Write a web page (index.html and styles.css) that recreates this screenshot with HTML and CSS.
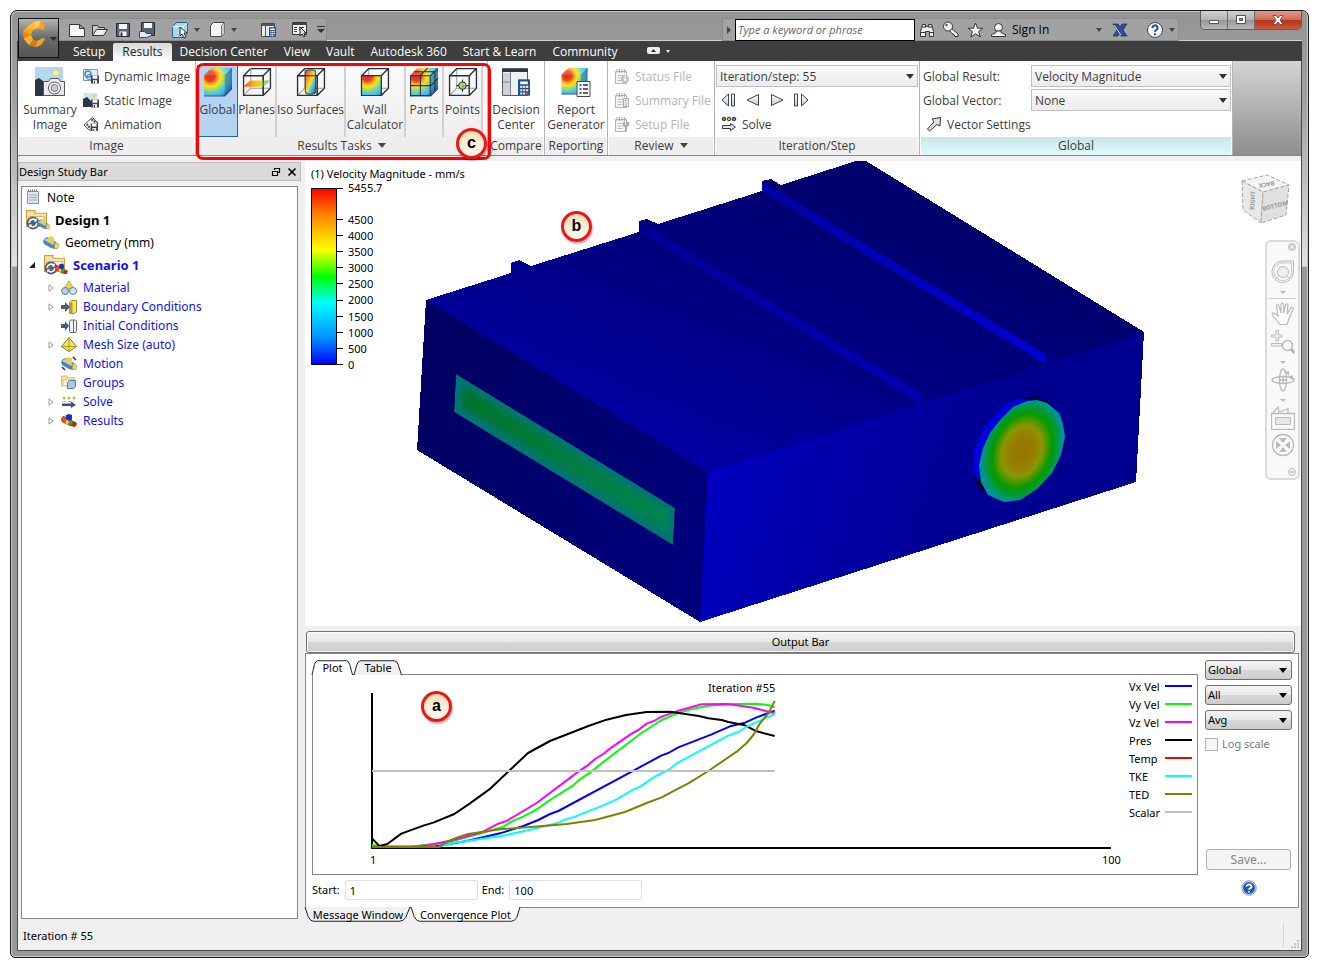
FILE: index.html
```html
<!DOCTYPE html>
<html lang="en">
<head>
<meta charset="utf-8">
<title>Simulation CFD - Results</title>
<link rel="stylesheet" href="styles.css">
</head>
<body>
<svg class="defs" width="0" height="0" aria-hidden="true">
  <defs>
    <radialGradient id="heat" gradientUnits="userSpaceOnUse" cx="7" cy="9" r="25">
      <stop offset="0" stop-color="#e02a20"/><stop offset=".2" stop-color="#ea4322"/><stop offset=".28" stop-color="#f79a1c"/>
      <stop offset=".4" stop-color="#fbe01e"/><stop offset=".5" stop-color="#b9e04a"/><stop offset=".62" stop-color="#5fd3c8"/>
      <stop offset=".78" stop-color="#48b4ee"/><stop offset="1" stop-color="#1d58c0"/>
    </radialGradient>
    <linearGradient id="tube" x1="0" y1="0" x2="1" y2="1">
      <stop offset="0" stop-color="#e03a20"/><stop offset=".3" stop-color="#f7a01c"/><stop offset=".5" stop-color="#f3e02a"/>
      <stop offset=".7" stop-color="#4cc4e0"/><stop offset="1" stop-color="#1d58c0"/>
    </linearGradient>
    <linearGradient id="plane" x1="0" y1="0" x2="1" y2="0">
      <stop offset="0" stop-color="#e8481c"/><stop offset=".4" stop-color="#f7b51c"/><stop offset=".7" stop-color="#d8e030"/><stop offset="1" stop-color="#48c4d8"/>
    </linearGradient>
    <linearGradient id="steel" x1="0" y1="0" x2="0" y2="1"><stop offset="0" stop-color="#fff"/><stop offset="1" stop-color="#c4c8ce"/></linearGradient>
    <symbol id="wire" viewBox="0 0 29 29">
      <path d="M8.500 1.500v19h19M8.500 20.500l-7 7" fill="none" stroke="#9a9ea8"/>
      <path d="M1.500 8.500h19v19h-19zM8.500 1.500h19v19M1.500 8.500l7-7M20.500 8.500l7-7M20.500 27.500l7-7" fill="none" stroke="#2b2f38" stroke-width="1.300"/>
    </symbol>
    <symbol id="solid" viewBox="0 0 29 29">
      <path d="M1 8l7-7h20v20l-7 7H1z" fill="url(#heat)"/>
      <path d="M21 8l7-7v20l-7 7z" fill="#123" opacity=".28"/>
      <path d="M1 8l7-7h20l-7 7z" fill="#fff" opacity=".15"/>
      <path d="M1 28h20l7-7" fill="none" stroke="#27568e"/>
    </symbol>
    <symbol id="disk" viewBox="0 0 10 10"><path d="M0 0h10v10H0z" fill="#3c4454"/><path d="M2 0h6v4H2zM2.500 6h5v4h-5z" fill="#fff"/><path d="M3.500 7h1.500v3H3.500z" fill="#3c4454"/></symbol>
    <symbol id="notepad" viewBox="0 0 16 16"><path d="M1.500 3.500h11v12h-11z" fill="#f4f4f4" stroke="#b4b4b4"/><path d="M3 1v4M5.500 1v4M8 1v4M10.500 1v4" stroke="#a8a8a8"/><path d="M3.500 7.500h7M3.500 10h7M3.500 12.500h5" stroke="#c0c0c0"/></symbol>
    <symbol id="pipe" viewBox="0 0 16 13">
      <path d="M0 5l2-3 3-1 8 5 1 3-2 4-4-1-7-4z" fill="#4f83b8"/><path d="M1 4l3-2 8 5-2 2z" fill="#a8cdea"/>
      <path d="M5 1.500L8 0l3 1.500V6L8 7 5 5z" fill="#e8d44c"/><path d="M12 6.500l3 1 1 3-2 2.500-3-1.500z" fill="#f0dc50" stroke="#937f28" stroke-width=".6"/>
    </symbol>
    <symbol id="hotpipe" viewBox="0 0 16 13">
      <path d="M0 5l2-3 4 1 6 4 3 1 1 2-2 3-5-1-8-4z" fill="#c8201c"/><path d="M1 4l3-1 3 2-2 4-4-2z" fill="#e4501c"/><path d="M6 5l3 2-2 4-3-2z" fill="#f4d024"/><path d="M9 6l3 2-2 4-3-2z" fill="#30a040"/>
      <path d="M5 1l3-1 3 1v4.500L8 7 5 5z" fill="#1c30c0"/>
    </symbol>
    <symbol id="folder" viewBox="0 0 20 18"><path d="M.5 16.500V1.500h8v2.500h11v12.500z" fill="#f5e2ac" stroke="#c8a040"/><path d="M2.500 16V7h15v9z" fill="#fbf2d4" stroke="#d8b868"/></symbol>
    <symbol id="cycle" viewBox="0 0 13 13"><circle cx="6.500" cy="6.500" r="6" fill="#50607a"/><path d="M3 6.500a3.500 3.500 0 0 1 6-2.500M10 6.500a3.500 3.500 0 0 1-6 2.500" fill="none" stroke="#fff" stroke-width="1.500"/><path d="M10 2v3H7zM3 11V8h3z" fill="#fff"/></symbol>
    <symbol id="calc" viewBox="0 0 11 15"><path d="M0 0h11v15H0z" fill="#1f5288"/><path d="M2 2h7v2.500H2z" fill="#fff"/><path d="M2 6h2v2H2zm2.700 0h2v2h-2zM7.400 6h2v2h-2zM2 9h2v2H2zm2.700 0h2v2h-2zM7.400 9h2v2h-2zM2 12h2v2H2zm2.700 0h2v2h-2z" fill="#dfe9f4"/><path d="M7.400 11.500h2V14h-2z" fill="#e04030"/></symbol>
  </defs>
</svg>

<div class="window">
  <header class="chrome">
    <button class="app-button" aria-label="Application menu">
      <svg width="40" height="40" viewBox="0 0 40 40"><path d="M14 3l8-1 4 3-1 6-6-2-5 2-2 5 2 5 4 1 6-3 2 1-4 6-5 2-7-2-5-6-1-8z" fill="#f6a41c"/><path d="M14 3l5 6-5 2-8-1z" fill="#ffb93a"/><path d="M22 2l-3 7-5-6z" fill="#ffd060"/><path d="M4 12l8 4-7 4z" fill="#e38a10"/><path d="M5 20l7-4 2 5-4 5z" fill="#fbb030"/><path d="M10 26l4-5 4 1-1 6z" fill="#d07f0a"/><path d="M31 18h7l-3.500 4z" fill="#2c2c2c"/></svg>
    </button>
    <div class="title-row">
      <div class="quick">
        <button aria-label="New"><svg width="18" height="16" viewBox="0 0 18 16"><path d="M1.500 2.500h10l5 4v8h-15zM11.500 2.500v4h5" fill="#f8f8f8" stroke="#30343c"/></svg></button>
        <button aria-label="Open"><svg width="18" height="16" viewBox="0 0 18 16"><path d="M1.500 13.500v-10h5l1 2h6v2" fill="#ccc" stroke="#30343c"/><path d="M1.500 13.500l4-6h11l-4 6z" fill="#eee" stroke="#30343c"/></svg></button>
        <button aria-label="Save"><svg width="16" height="16" viewBox="0 0 16 16"><path d="M1.500 1.500h13v13h-13z" fill="#5a6270" stroke="#222a36"/><path d="M4 2h8v5H4zM4.500 9.500h7V14h-7z" fill="#f6f6f6"/><path d="M5.500 10.500h2V14h-2z" fill="#333"/></svg></button>
        <button aria-label="Save as"><svg width="18" height="18" viewBox="0 0 18 18"><path d="M3.500 1.500h13v13h-13z" fill="#5a6270" stroke="#222a36"/><path d="M6 2h8v5H6z" fill="#f6f6f6"/><path d="M1.500 10.500h5l2 2h5v2l-5 2h-7z" fill="#dcebf6" stroke="#245078"/></svg></button>
        <button class="gap" aria-label="Select volume"><svg width="18" height="18" viewBox="0 0 18 18"><path d="M1.500 5.500l4-4h11v11l-4 4h-11z" fill="#a5d8f2" stroke="#24658e"/><path d="M1.500 5.500h11v11M12.500 5.500l4-4" fill="none" stroke="#e8f7ff"/><path d="M9 6v9l2-2 2 4 2-1-2-4h3z" fill="#fff" stroke="#222"/></svg></button>
        <i class="tri"></i>
        <button class="wide" aria-label="Visual style"><svg width="17" height="17" viewBox="0 0 17 17"><path d="M1.500 4.500l3-3h11v11l-3 3h-11z" fill="#f6f6f6" stroke="#444"/><path d="M12.500 4.500l3-3v11l-3 3z" fill="#ccc" stroke="#777"/></svg></button>
        <i class="tri"></i>
        <button class="far" aria-label="Decision center"><svg width="17" height="16" viewBox="0 0 17 16"><path d="M1.500 1.500h13v13h-13z" fill="#eee" stroke="#444"/><path d="M2 3h12" stroke="#555" stroke-width="2"/><path d="M5.500 3v11" stroke="#555"/><use href="#calc" x="9" y="5" width="7" height="10"/></svg></button>
        <button class="far" aria-label="Customize"><svg width="17" height="17" viewBox="0 0 17 17"><path d="M1.500 1.500h14v12h-14z" fill="#f2f2f2" stroke="#333"/><path d="M1 3h15" stroke="#444" stroke-width="2"/><path d="M3 6.500h3M3 8.500h3M3 10.500h3M8 6.500h5M8 8.500h2" stroke="#444"/><path d="M9 6v9l2-2 2 3 1-1-1-3h2z" fill="#ddd" stroke="#222"/></svg></button>
        <svg class="more" width="10" height="8" viewBox="0 0 10 8"><path d="M1 .5h8" stroke="#333"/><path d="M1 3h8L5 7z" fill="#333"/></svg>
      </div>
      <div class="info">
        <svg width="12" height="10" viewBox="0 0 12 10"><path d="M4 1l4 4-4 4z" fill="#444"/></svg>
        <input type="text" aria-label="Search" placeholder="Type a keyword or phrase">
        <button aria-label="Find"><svg width="17" height="16" viewBox="0 0 17 16"><path d="M1.500 14.500v-5l2-7h3v2h3v-2h3l2 7v5h-4v-5h-4v5z" fill="#eee" stroke="#30343c"/><path d="M3 5h4M9 5h4M2 10.500h4M10 10.500h4" stroke="#30343c"/></svg></button>
        <button aria-label="Subscription"><svg width="18" height="17" viewBox="0 0 18 17"><path d="M9 7l7 6v2.500h-3l-1-2-2-1-3-3.500" fill="#eee" stroke="#30343c"/><circle cx="6" cy="5.500" r="4.500" fill="#f2f2f2" stroke="#30343c"/><circle cx="4.500" cy="4" r="1.200" fill="#555"/></svg></button>
        <button aria-label="Favorites"><svg width="17" height="16" viewBox="0 0 17 16"><path d="M8.500 1l2 5.200h5.500l-4.400 3.400 1.700 5.400-4.800-3.300L3.700 15l1.700-5.400L1 6.200h5.500z" fill="#f6f6f6" stroke="#30343c"/></svg></button>
        <button class="sign"><svg width="17" height="16" viewBox="0 0 17 16"><circle cx="8.500" cy="5.500" r="4" fill="#f6f6f6" stroke="#30343c"/><path d="M1.500 14.500v-2l4-1.500 1-2h4l1 2 4 1.500v2z" fill="#f6f6f6" stroke="#30343c"/></svg>Sign In</button>
        <i class="tri last"></i>
        <button aria-label="Exchange"><svg width="16" height="14" viewBox="0 0 16 14"><path d="M1 1h5l2 3 2-3h5l-4 6 4 6H9L7.500 10 6 13H1l4-6z" fill="#2e4d94" stroke="#17295c" stroke-width=".7"/><path d="M2 2l7 10" stroke="#dbe3f4"/></svg></button>
        <button class="help" aria-label="Help"><svg width="18" height="18" viewBox="0 0 18 18"><circle cx="9" cy="9" r="7.500" fill="#f7f9fc" stroke="#3b465c"/><path d="M6.500 7a2.500 2.500 0 1 1 3.800 2c-1 .6-1.300 1-1.300 2" fill="none" stroke="#2050a0" stroke-width="2"/><path d="M8 12.200h2v2H8z" fill="#2050a0"/></svg></button>
        <i class="tri"></i>
      </div>
      <div class="caption">
        <button aria-label="Minimize"><svg width="12" height="10" viewBox="0 0 12 10"><path d="M1.500 5.500h9v3h-9z" fill="#fff" stroke="#555"/></svg></button>
        <button aria-label="Maximize"><svg width="12" height="10" viewBox="0 0 12 10"><path d="M1.500 .5h9v8h-9z" fill="#fff" stroke="#555"/><path d="M4.500 3.500h3v2h-3z" fill="#999" stroke="#555"/></svg></button>
        <button class="close" aria-label="Close"><svg width="12" height="10" viewBox="0 0 12 10"><path d="M1 .5h3l2 2.500 2-2.500h3L8 5l3 4.500H8L6 7 4 9.500H1L4 5z" fill="#fff" stroke="#6a3a34" stroke-width=".8"/></svg></button>
      </div>
    </div>
    <nav class="tabs">
      <button>Setup</button><button class="on">Results</button><button>Decision Center</button><button>View</button><button>Vault</button><button>Autodesk 360</button><button>Start &amp; Learn</button><button>Community</button>
      <svg width="24" height="8" viewBox="0 0 24 8"><rect width="13" height="7" rx="2" fill="#eee"/><path d="M4 5l2.500-3L9 5z" fill="#333"/><path d="M19 3h4l-2 3z" fill="#eee"/></svg>
    </nav>
  </header>

  <div class="client">
    <div class="ribbon">
      <section class="panel p-image">
        <div class="body">
          <button class="big"><svg width="32" height="30" viewBox="0 0 32 30"><path d="M1 0h28v29H1z" fill="#b5d8ee"/><path d="M1 18h28v11H1z" fill="#dfeefa"/><circle cx="22" cy="6" r="3" fill="#fff3a0" stroke="#f0d468"/><path d="M1 13l4-2 4 3 3 15H1z" fill="#2e3642"/><path d="M9.500 14.500h5l2-3h8l2 3h4v14h-21z" fill="#e8eaed" stroke="#50555e"/><circle cx="20.500" cy="21" r="6" fill="#fff" stroke="#50555e"/><circle cx="20.500" cy="21" r="3.500" fill="#c8ccd2" stroke="#777"/></svg>Summary<br>Image</button>
          <div class="stack">
            <button><svg width="16" height="16" viewBox="0 0 16 16"><path d="M.5 1.500h14v11H.5z" fill="#e4ecf4" stroke="#8a93a0"/><circle cx="5" cy="6" r="3" fill="none" stroke="#4888c0" stroke-width="1.500"/><circle cx="6" cy="9" r="2.500" fill="none" stroke="#4888c0"/><use href="#disk" x="8" y="7" width="8" height="9"/></svg>Dynamic Image</button>
            <button><svg width="16" height="16" viewBox="0 0 16 16"><path d="M.5 1h14v12H.5z" fill="#cfe4f2"/><circle cx="11" cy="4" r="1.500" fill="#f0d040"/><path d="M0 7l4-2 4 4v6H0z" fill="#2e3642"/><use href="#disk" x="8" y="7" width="8" height="9"/></svg>Static Image</button>
            <button><svg width="16" height="16" viewBox="0 0 17 16"><path d="M1 9L10 1l6 6-6 8-4-1z" fill="#f4f4f4" stroke="#3c4454"/><path d="M4 8l4 5M9 3l5 4" stroke="#3c4454" stroke-dasharray="2 1" stroke-width="2"/><use href="#disk" x="8" y="7" width="8" height="9"/></svg>Animation</button>
          </div>
        </div>
        <h2>Image</h2>
      </section>
      <section class="panel p-tasks">
        <div class="body tasks">
          <button class="t-global on"><svg width="30" height="30" viewBox="0 0 29 29"><use href="#solid"/></svg>Global</button>
          <button class="t-planes"><svg width="30" height="30" viewBox="0 0 29 29"><use href="#wire"/><path d="M1 19l7-6h19l-6 6z" fill="url(#plane)"/><path d="M20.500 8.500v19" stroke="#2b2f38"/></svg>Planes</button>
          <button class="t-iso"><svg width="30" height="30" viewBox="0 0 29 29"><use href="#wire"/><path d="M9 5v19c0 3 10 3 10 0V5c0-3-10-3-10 0z" fill="url(#tube)" stroke="#274a70"/><path d="M1 8.500h19.500v19" fill="none" stroke="#2b2f38"/></svg>Iso Surfaces</button>
          <button class="t-wall"><svg width="30" height="30" viewBox="0 0 29 29"><use href="#wire"/><path d="M1.500 8.500h19v19h-19z" fill="url(#heat)" stroke="#2b2f38"/></svg>Wall<br>Calculator</button>
          <button class="t-parts"><svg width="30" height="30" viewBox="0 0 29 29"><use href="#solid"/><path d="M1.500 8.500h19v19h-19zM1 18h20l7-7M11 28V8l7-7M5 4.500h20v19M20.500 8.500l7-7" fill="none" stroke="#2b2f38"/></svg>Parts</button>
          <button class="t-points"><svg width="30" height="30" viewBox="0 0 29 29"><use href="#wire"/><path d="M14 12v12M8 18h12" stroke="#2b2f38"/><circle cx="14" cy="18" r="3.500" fill="#c9d85a" stroke="#2b2f38"/><circle cx="14.500" cy="18.500" r="1.500" fill="#60b8c8"/></svg>Points</button>
        </div>
        <h2>Results Tasks <i class="drop"></i></h2>
        <div class="highlight"></div>
        <div class="callout call-c">c</div>
      </section>
      <section class="panel p-compare">
        <div class="body"><button class="big"><svg width="30" height="30" viewBox="0 0 30 30"><path d="M1.500 1.500h25v27h-25z" fill="#eef0f2" stroke="#555c68"/><path d="M1 2h26v3H1z" fill="#30343c"/><path d="M2 6h7v22H2z" fill="#ccd2da"/><path d="M9.500 5v23M2 15h7" stroke="#7c8494"/><use href="#calc" x="17" y="12" width="12" height="17"/></svg>Decision<br>Center</button></div>
        <h2>Compare</h2>
      </section>
      <section class="panel p-report">
        <div class="body"><button class="big"><svg width="32" height="30" viewBox="0 0 31 30"><use href="#solid" width="28" height="28"/><path d="M16.500 14.500h13v15h-13z" fill="#f4f6f8" stroke="#444c58"/><path d="M19 18h2M19 22h2M19 26h2M22.500 18h5M22.500 22h5M22.500 26h5" stroke="#333" stroke-width="1.500"/></svg>Report<br>Generator</button></div>
        <h2>Reporting</h2>
      </section>
      <section class="panel p-review">
        <div class="body stack dim">
          <button disabled><svg width="16" height="16" viewBox="0 0 16 16"><use href="#notepad"/><circle cx="11" cy="11" r="4" fill="#c4c4c4"/><path d="M11 8v1M11 10v3" stroke="#fff" stroke-width="1.500"/></svg>Status File</button>
          <button disabled><svg width="16" height="16" viewBox="0 0 16 16"><use href="#notepad"/><path d="M9.500 6.500h5v8h-5z" fill="#eee" stroke="#aaa"/><path d="M11 8.500h2M11 11h2M11 13h2" stroke="#aaa"/></svg>Summary File</button>
          <button disabled><svg width="16" height="16" viewBox="0 0 16 16"><use href="#notepad"/><path d="M10 6v3l2 1.500L14 9V6M12 10v5" fill="none" stroke="#aaa" stroke-width="2"/></svg>Setup File</button>
        </div>
        <h2>Review <i class="drop"></i></h2>
      </section>
      <section class="panel p-step">
        <div class="body col">
          <span class="pick"><select aria-label="Iteration step"><option>Iteration/step: 55</option></select></span>
          <div class="play">
            <button aria-label="First"><svg width="16" height="14" viewBox="0 0 16 14"><path d="M7.500 1v12L1 7zM10.500 1h3v12h-3z" fill="url(#steel)" stroke="#3c4454"/></svg></button>
            <button aria-label="Back"><svg width="16" height="14" viewBox="0 0 16 14"><path d="M13.500 1.500v11L2 7z" fill="url(#steel)" stroke="#3c4454"/></svg></button>
            <button aria-label="Play"><svg width="16" height="14" viewBox="0 0 16 14"><path d="M2.500 1.500v11L14 7z" fill="url(#steel)" stroke="#3c4454"/></svg></button>
            <button aria-label="Last"><svg width="16" height="14" viewBox="0 0 16 14"><path d="M8.500 1v12L15 7zM1.500 1h3v12h-3z" fill="url(#steel)" stroke="#3c4454"/></svg></button>
          </div>
          <button class="line"><svg width="16" height="16" viewBox="0 0 16 16"><circle cx="3" cy="3" r="1.800" fill="#d06020" stroke="#333"/><circle cx="8" cy="3" r="1.800" fill="#d8c030" stroke="#333"/><circle cx="13" cy="3" r="1.800" fill="#4880d0" stroke="#333"/><path d="M1.500 9.500h8v-2l5 3.500-5 3.500v-2h-8z" fill="#e8e8e8" stroke="#30343c"/></svg>Solve</button>
        </div>
        <h2>Iteration/Step</h2>
      </section>
      <section class="panel p-global">
        <div class="body col">
          <label class="field"><span>Global Result:</span><span class="pick"><select><option>Velocity Magnitude</option></select></span></label>
          <label class="field"><span>Global Vector:</span><span class="pick"><select><option>None</option></select></span></label>
          <button class="line"><svg width="16" height="16" viewBox="0 0 16 16"><path d="M1.500 13l6.500-7-2-3 8.500-1.500L14 10l-3-1.500-7.500 6.500z" fill="#e0e4e8" stroke="#30343c"/></svg>Vector Settings</button>
        </div>
        <h2>Global</h2>
      </section>
    </div>

    <div class="work">
      <aside class="study">
        <div class="study-head"><span>Design Study Bar</span>
          <button aria-label="Float"><svg width="10" height="10" viewBox="0 0 10 10"><path d="M3.500 3V1.500h5v4H7M1.500 4.500h5v4h-5zM3 1.500h6M1 4.500h6" fill="none" stroke="#000" stroke-width="1.200"/></svg></button>
          <button aria-label="Close bar"><svg width="10" height="10" viewBox="0 0 10 10"><path d="M1.500 1.500l7 7M8.500 1.500l-7 7" stroke="#000" stroke-width="1.700"/></svg></button>
        </div>
        <ul class="tree">
          <li class="note"><svg width="14" height="16" viewBox="0 0 14 16"><path d="M1.500 2.500h11v12h-11z" fill="#dfe6ee" stroke="#8a93a0"/><path d="M2 1.500h10" stroke="#777" stroke-dasharray="1 1" stroke-width="2"/><path d="M3 6h8M3 8.500h8M3 11h8" stroke="#9fabba"/></svg>Note</li>
          <li class="design"><svg width="24" height="22" viewBox="0 0 24 22"><use href="#folder" x="0" y="0" width="21" height="19"/><use href="#cycle" x="0" y="7" width="14" height="14"/><use href="#pipe" x="11" y="9" width="13" height="12"/></svg>Design 1</li>
          <li class="geo"><svg width="16" height="13" viewBox="0 0 16 13"><use href="#pipe"/></svg>Geometry (mm)</li>
          <li class="scen"><button class="tog" aria-label="Collapse"><svg width="6" height="6" viewBox="0 0 6 6"><path d="M6 0v6H0z" fill="#222"/></svg></button><svg width="24" height="22" viewBox="0 0 24 22"><use href="#folder" x="0" y="0" width="21" height="19"/><use href="#cycle" x="0" y="7" width="14" height="14"/><use href="#hotpipe" x="11" y="9" width="13" height="12"/></svg>Scenario 1</li>
          <li class="item"><button class="tog" aria-label="Expand"><svg width="6" height="8" viewBox="0 0 6 8"><path d="M1 .8v6.400L5 4z" fill="#fff" stroke="#999"/></svg></button><svg width="16" height="14" viewBox="0 0 16 14"><path d="M8 0l4 6-4 2-4-2z" fill="#e8dc48" stroke="#8c8430" stroke-width=".6"/><circle cx="4" cy="10" r="3.500" fill="#b4cfe6" stroke="#5a80a4"/><circle cx="12" cy="10" r="3.500" fill="#d4e4f0" stroke="#5a80a4"/></svg>Material</li>
          <li class="item"><button class="tog" aria-label="Expand"><svg width="6" height="8" viewBox="0 0 6 8"><path d="M1 .8v6.400L5 4z" fill="#fff" stroke="#999"/></svg></button><svg width="16" height="14" viewBox="0 0 16 14"><path d="M8.500 2.500l2-2h5v11l-2 2h-5z" fill="#f4e46c" stroke="#a08c20"/><path d="M8.500 2.500h3v11h-3z" fill="#b8a020"/><path d="M0 5h4V2l5 5-5 5V9H0z" fill="#44607e"/></svg>Boundary Conditions</li>
          <li class="item"><i class="tog"></i><svg width="16" height="14" viewBox="0 0 16 14"><path d="M8.500 2.500l1-1.500h5l1 1v10l-1 1.500h-5l-1-1zM12.500 1v12" fill="#f2f2f2" stroke="#666"/><path d="M0 5h4V2l4 5-4 5V9H0z" fill="#44607e"/></svg>Initial Conditions</li>
          <li class="item"><button class="tog" aria-label="Expand"><svg width="6" height="8" viewBox="0 0 6 8"><path d="M1 .8v6.400L5 4z" fill="#fff" stroke="#999"/></svg></button><svg width="16" height="15" viewBox="0 0 16 15"><path d="M8 .5l7.500 9L8 14.500.5 9.500z" fill="#f0e45c" stroke="#8c8020"/><path d="M8 1v13M1 9.500h14" stroke="#a89c30"/></svg>Mesh Size (auto)</li>
          <li class="item"><i class="tog"></i><svg width="16" height="15" viewBox="0 0 16 15"><use href="#pipe" y="1" width="16" height="13"/><path d="M12 1l3 3M1 11l3 3" stroke="#333" stroke-width="1.500"/></svg>Motion</li>
          <li class="item"><i class="tog"></i><svg width="16" height="15" viewBox="0 0 16 15"><use href="#folder" width="14" height="12"/><path d="M6.500 7.500l2-2h6v6l-2 2h-6z" fill="#a4c8ec" stroke="#5080b0"/></svg>Groups</li>
          <li class="item"><button class="tog" aria-label="Expand"><svg width="6" height="8" viewBox="0 0 6 8"><path d="M1 .8v6.400L5 4z" fill="#fff" stroke="#999"/></svg></button><svg width="16" height="12" viewBox="0 0 16 12"><circle cx="3" cy="2" r="1.500" fill="#c8b440"/><circle cx="8" cy="2" r="1.500" fill="#c8b440"/><circle cx="13" cy="2" r="1.500" fill="#c8b440"/><path d="M2 5.500h11" stroke="#aaa" stroke-dasharray="3 2"/><path d="M1 7.500h9V5.500l5 3.500-5 3v-2H1z" fill="#34507c"/></svg>Solve</li>
          <li class="item"><button class="tog" aria-label="Expand"><svg width="6" height="8" viewBox="0 0 6 8"><path d="M1 .8v6.400L5 4z" fill="#fff" stroke="#999"/></svg></button><svg width="16" height="13" viewBox="0 0 16 13"><use href="#hotpipe"/></svg>Results</li>
        </ul>
      </aside>

      <main class="stage">
        <div class="view">
          <svg class="model" viewBox="305 161 996 465" preserveAspectRatio="xMinYMin meet">
            <defs>
              <linearGradient id="top" gradientUnits="userSpaceOnUse" x1="820" y1="170" x2="700" y2="470"><stop offset="0" stop-color="#00006c"/><stop offset=".5" stop-color="#000082"/><stop offset="1" stop-color="#0000a4"/></linearGradient>
              <linearGradient id="left" gradientUnits="userSpaceOnUse" x1="420" y1="400" x2="700" y2="520"><stop offset="0" stop-color="#000062"/><stop offset="1" stop-color="#00007c"/></linearGradient>
              <linearGradient id="right" gradientUnits="userSpaceOnUse" x1="700" y1="500" x2="960" y2="580"><stop offset="0" stop-color="#0000c0"/><stop offset=".5" stop-color="#0000a6"/><stop offset="1" stop-color="#000090"/></linearGradient>
              <linearGradient id="rib2" x1="0" y1="0" x2="1" y2="1"><stop offset="0" stop-color="#000094"/><stop offset="1" stop-color="#0000b4"/></linearGradient>
              <linearGradient id="rib3" x1="0" y1="0" x2="1" y2="1"><stop offset="0" stop-color="#0000a4"/><stop offset="1" stop-color="#0000d4"/></linearGradient>
              <linearGradient id="scale" x1="0" y1="0" x2="0" y2="1"><stop offset="0" stop-color="#f00"/><stop offset=".15" stop-color="#ff8400"/><stop offset=".35" stop-color="#ff0"/><stop offset=".5" stop-color="#0f0"/><stop offset=".65" stop-color="#0ff"/><stop offset=".85" stop-color="#0090ff"/><stop offset="1" stop-color="#00f"/></linearGradient>
              <radialGradient id="outlet" gradientUnits="userSpaceOnUse" cx="0" cy="0" r="1" gradientTransform="translate(1022 451) rotate(22) scale(40 55)"><stop offset="0" stop-color="#967600"/><stop offset=".3" stop-color="#967e00"/><stop offset=".48" stop-color="#8c9600"/><stop offset=".7" stop-color="#089a00"/><stop offset=".82" stop-color="#009a30"/><stop offset=".96" stop-color="#00949a"/></radialGradient>
              <linearGradient id="slot" x1="0" y1="0" x2="1" y2="0"><stop offset="0" stop-color="#007428"/><stop offset="1" stop-color="#008650"/></linearGradient>
              <filter id="soft"><feGaussianBlur stdDeviation="3"/></filter>
              <clipPath id="slotclip"><path d="M456 374L675 508 673 545 454 412z"/></clipPath>
            </defs>
            <g shape-rendering="crispEdges">
              <path d="M426 300L866 161 1144 332 1136 482 700 622 417 450z" fill="#000086"/>
              <path d="M426 300L511 273V263L519 260 531 266 639 232V221L647 219 658 224 762 191V181L771 179 781 185 856 161H866L1144 332 708 472z" fill="url(#top)"/>
              <path d="M426 300L708 472 700 622 417 450z" fill="url(#left)"/>
              <path d="M708 472L1144 332 1136 482 700 622z" fill="url(#right)"/>
              <path d="M639 221L922 394V404L639 232z" fill="url(#rib2)"/>
              <path d="M762 181L1045 354V364L762 191z" fill="url(#rib3)"/>
              <path d="M922 394l9-3v10l-9 3zM1045 354l9-3v10l-9 3z" fill="#000088"/>
              <path d="M794 437l9-4v9l-9 4z" fill="#0000a0"/>
            </g>
            <path d="M781 185L1053 351M658 224L931 391" stroke="#0000a8" stroke-dasharray="1 4"/>
            <g clip-path="url(#slotclip)"><path d="M456 374L675 508 673 545 454 412z" fill="#007474"/><path d="M463 386L669 512 668 533 461 406z" fill="url(#slot)" filter="url(#soft)"/></g>
            <path d="M1042 399l-15-3-22 8-20 22-11 22-1 22 6 16 10 9z" fill="#0000dc"/>
            <path d="M1020 398l17-2 16 9zM974 478l5 10 8 5-4-14z" fill="#00003c"/>
            <path d="M1037 400l10 3 12 10 4 11 2 13-4 18-9 18-15 16-17 11-16 2-16-7-7-13-2-17 4-17 7-15 10-13 13-13 14-6z" fill="url(#outlet)"/>
            <path d="M311.500 188.500h25v176h-25z" fill="url(#scale)" stroke="#000"/>
            <path d="M337 188.500h6M337 219.500h6M337 235.500h6M337 251.500h6M337 267.500h6M337 283.500h6M337 300.500h6M337 316.500h6M337 332.500h6M337 348.500h6M337 364.500h6" stroke="#000"/>
            <g class="scale-text">
              <text x="311" y="178">(1) Velocity Magnitude - mm/s</text>
              <text x="348" y="192">5455.7</text><text x="348" y="224">4500</text><text x="348" y="240">4000</text><text x="348" y="256">3500</text><text x="348" y="272">3000</text><text x="348" y="288">2500</text><text x="348" y="304">2000</text><text x="348" y="321">1500</text><text x="348" y="337">1000</text><text x="348" y="353">500</text><text x="348" y="369">0</text>
            </g>
            <g stroke="#a4a4a4" stroke-dasharray="4 2">
              <path d="M1242 181l25-6 22 10-26 7z" fill="#f4f4f4"/><path d="M1242 181l21 11-2 31-18-13z" fill="#e8e8e8"/><path d="M1263 192l26-7-3 30-25 8z" fill="#e0e0e0"/>
            </g>
            <g class="cube-text"><text x="0" y="0" transform="translate(1263 211) rotate(-14)">BOTTOM</text><text x="0" y="0" transform="translate(1254 210) rotate(-86)">RIGHT</text><text x="0" y="0" transform="translate(1274 181) rotate(170)">BACK</text></g>
          </svg>
          <div class="callout call-b">b</div>
          <div class="navbar">
            <button class="end" aria-label="Close navigation"><svg width="8" height="8" viewBox="0 0 8 8"><circle cx="4" cy="4" r="4" fill="#ccc"/><path d="M2.500 2.500l3 3M5.500 2.500l-3 3" stroke="#fff"/></svg></button>
            <button class="wheel" aria-label="Wheel"><svg width="24" height="24" viewBox="0 0 24 24"><path d="M12 1h10.500v11A10.800 10.800 0 1 1 12 1z" fill="#f2f2f4" stroke="#b8babe"/><path d="M12 3h8.500v9A8.800 8.800 0 1 1 12 3z" fill="#fafafa" stroke="#c8cacd"/><circle cx="12" cy="12" r="5.500" fill="#eee" stroke="#b8babe"/><path d="M8 16l-3 3M16 16l3 3" stroke="#c0c2c6"/></svg></button>
            <i class="nav-tri"></i><hr>
            <button aria-label="Pan"><svg width="24" height="24" viewBox="0 0 24 24"><path d="M7 20L1.500 13c-1-2 1-2.500 2-1.500L7 14 5.500 4c0-2 2-2 2.500 0l2 7V2.500c0-2 2.500-2 2.500 0V11l2-8c.5-2 2.800-1 2.500.5L16 12l4-6c1-1.500 3-.5 2 1.500l-4 9-2 6H9z" fill="#fff" stroke="#b8babe" stroke-width="1.200"/></svg></button>
            <button class="zoom" aria-label="Zoom"><svg width="24" height="24" viewBox="0 0 24 24"><path d="M5 .5h2.500V5H11v2H7.500v4H5V7H.5V5H5zM.5 13.500h10v2.500H.5z" fill="#f4f4f4" stroke="#b8babe"/><circle cx="16.500" cy="15.500" r="5" fill="#fafafa" stroke="#b8babe" stroke-width="1.500"/><path d="M20 19l3.500 4" stroke="#b8babe" stroke-width="3"/></svg></button>
            <i class="nav-tri"></i>
            <button aria-label="Orbit"><svg width="24" height="24" viewBox="0 0 24 24"><g fill="none" stroke="#b8babe" stroke-width="1.300"><ellipse cx="12" cy="12" rx="3.500" ry="11"/><ellipse cx="12" cy="12" rx="11" ry="3.500"/><path d="M12 9v6M9 12h6"/></g><path d="M14 4l4-1v5zM17 9l5-2v5z" fill="#b8babe"/></svg></button>
            <i class="nav-tri"></i>
            <button aria-label="Look"><svg width="24" height="24" viewBox="0 0 24 24"><path d="M.5 7.500h23v16H.5zM2 7l5-6 1 5 9-3v4" fill="#fafafa" stroke="#b8babe" stroke-width="1.300"/><path d="M4.500 11.500h15v7h-15z" fill="#e4e6ea" stroke="#b8babe"/></svg></button>
            <button class="fit" aria-label="Fit"><svg width="24" height="24" viewBox="0 0 24 24"><circle cx="12" cy="12" r="10.500" fill="#fafafa" stroke="#b8babe" stroke-width="1.300"/><path d="M8 5h8l-4 5zM8 19h8l-4-5zM5 8v8l5-4zM19 8v8l-5-4z" fill="#b8babe"/></svg></button>
            <button class="end" aria-label="Options"><svg width="8" height="8" viewBox="0 0 8 8"><circle cx="4" cy="4" r="3.500" fill="#eee" stroke="#c0c0c0"/><path d="M2 4h4" stroke="#aaa"/></svg></button>
          </div>
        </div>

        <button class="output">Output Bar</button>
        <div class="plot-panel">
          <div class="plot-main">
            <div class="folds">
              <button class="on plot"><svg viewBox="0 0 100 20" preserveAspectRatio="none"><path d="M0 20L6 6Q9 1 14 1H84Q89 1 92 6L99 20"/></svg><span>Plot</span></button>
              <button class="table"><svg viewBox="0 0 100 20" preserveAspectRatio="none"><path d="M0 20L6 6Q9 1 14 1H84Q89 1 92 6L99 20"/></svg><span>Table</span></button>
            </div>
            <div class="chart">
              <svg class="curves" viewBox="313 675 806 199" preserveAspectRatio="xMinYMin meet">
                <path d="M372 693v155.500M371 848h740" stroke="#000" stroke-width="2" fill="none"/>
                <g transform="translate(300 620) scale(.33333)" fill="none" stroke-width="6" stroke-linejoin="round">
                  <path stroke="#00f" d="M216 680H400L500 663 600 640 670 618 715 600 750 582 775 573 995 455 1085 406 1105 399 1135 382 1235 343 1290 319 1335 308 1370 292 1424 272"/>
                  <path stroke="#0f0" d="M216 674L238 680H335L450 665 560 635 610 620 640 602 665 592 710 568 750 540 820 496 840 478 870 458 910 426 1020 342 1085 300 1130 281 1180 266 1225 257 1300 252 1370 251 1405 255 1424 262"/>
                  <path stroke="#f0f" d="M216 680H335L390 675 450 662 545 637 595 611 620 603 710 549 835 455 862 437 885 417 910 402 935 382 995 341 1015 330 1040 311 1062 303 1085 290 1130 274 1165 264 1205 253 1285 252 1360 263 1424 280"/>
                  <path stroke="#000" d="M216 655L238 678 262 672 304 641 370 617 400 608 463 582 510 550 572 505 630 450 684 399 750 363 865 318 920 299 978 285 1040 276 1110 275 1197 288 1225 295 1265 300 1285 306 1335 316 1370 334 1424 348"/>
                  <path stroke="#0ff" d="M416 680L460 669 610 647 700 627 770 610 795 599 825 590 910 556 950 538 995 511 1020 500 1065 470 1110 447 1130 430 1285 347 1315 336 1340 320 1424 282"/>
                  <path stroke="#808000" d="M216 681H418L440 665 470 653 500 643 600 628 720 619 800 612 885 600 975 576 1040 549 1085 532 1130 508 1165 490 1225 453 1310 395 1340 369 1360 345 1380 310 1405 280 1424 243"/>
                  <path stroke="silver" d="M216 453H1424"/>
                </g>
                <g class="axis-text"><text x="708" y="692">Iteration #55</text><text x="370" y="864">1</text><text x="1102" y="864">100</text></g>
              </svg>
              <ul class="legend">
                <li class="vx">Vx Vel</li><li class="vy">Vy Vel</li><li class="vz">Vz Vel</li><li class="pres">Pres</li><li class="temp">Temp</li><li class="tke">TKE</li><li class="ted">TED</li><li class="scalar">Scalar</li>
              </ul>
              <div class="callout call-a">a</div>
            </div>
            <div class="range"><label for="start">Start:</label><input id="start" type="text" value="1"><label for="end">End:</label><input id="end" type="text" value="100"></div>
          </div>
          <div class="plot-side">
            <span class="pick"><select aria-label="Scope"><option>Global</option></select></span>
            <span class="pick"><select aria-label="Quantity"><option>All</option></select></span>
            <span class="pick"><select aria-label="Statistic"><option>Avg</option></select></span>
            <label class="check"><input type="checkbox" disabled>Log scale</label>
            <button class="save" disabled>Save...</button>
            <button class="q" aria-label="Plot help"><svg width="16" height="16" viewBox="0 0 16 16"><circle cx="8" cy="8" r="6.500" fill="#2456b8" stroke="#fff"/><circle cx="8" cy="8" r="7.200" fill="none" stroke="#5078b8" stroke-width=".8"/><path d="M5.500 6.500a2.500 2 0 1 1 3.600 1.800c-.8.400-1.100.8-1.100 1.500M8 11v1.500" fill="none" stroke="#fff" stroke-width="1.800"/></svg></button>
          </div>
        </div>
        <div class="folds low">
          <button class="msg"><svg viewBox="0 0 100 20" preserveAspectRatio="none"><path d="M0 0L3 13Q5 19 8 19H89Q93 19 95 14L99 0"/></svg><span>Message Window</span></button>
          <button class="on conv"><svg viewBox="0 0 100 20" preserveAspectRatio="none"><path d="M0 0L3 13Q5 19 8 19H92Q95 19 97 14L100 0"/></svg><span>Convergence Plot</span></button>
        </div>
      </main>
    </div>
    <footer class="status"><span>Iteration # 55</span><svg width="18" height="26" viewBox="0 0 18 26"><path d="M.5 0v24" stroke="#d4d4d4"/><path d="M14 17h2v2h-2zM11 20h2v2h-2zM14 20h2v2h-2zM8 23h2v2H8zM11 23h2v2h-2zM14 23h2v2h-2z" fill="#c4c4c4"/></svg></footer>
  </div>
</div>
</body>
</html>
```

FILE: styles.css
```css
* { box-sizing: border-box; }
html { height: 100%; }
body { margin: 0; padding: 10px; min-height: 100vh; display: flex; background: #fff; font: 12px/15px "Open Sans", "Noto Sans", sans-serif; color: #000; }
button, input, select { font: inherit; color: inherit; margin: 0; }
button { background: none; border: 0; padding: 0; }
svg { display: block; flex: none; }
.defs { position: absolute; }
h2 { margin: 0; font-weight: 400; font-size: 12px; }
ul { list-style: none; margin: 0; padding: 0; }

.window { flex: 1; min-width: 0; display: flex; flex-direction: column; border: 1px solid #1c1c1c; border-radius: 7px 7px 5px 5px; padding: 0 6px 6px; background: linear-gradient(#959595 0, #a0a0a0 90px, #e0e0e0 255px, #999 256px); box-shadow: inset 0 0 0 1px #c8c8c8; }

.chrome { display: grid; grid-template-columns: 42px 1fr; grid-template-rows: 30px 20px; }
.app-button { grid-area: 1 / 1 / 3 / 2; margin: 7px 0 3px 1px; border: 1px solid #111; background: linear-gradient(#b4b4b4, #6a6a6a 50%, #555); z-index: 1; overflow: hidden; }
.title-row { grid-area: 1 / 2; display: flex; align-items: flex-end; border-bottom: 1px solid #d0d0d0; }
.quick, .info { display: flex; align-items: center; height: 23px; margin-bottom: -1px; background: #a2a2a2; border: 1px solid #8c8c8c; }
.quick { width: 268px; padding-left: 6px; border-left: 0; }
.quick button { width: 24px; display: flex; justify-content: center; }
.quick .gap { margin-left: 10px; }
.quick .wide { margin-left: 4px; }
.quick .far { margin-left: 7px; }
.quick .tri + .far { margin-left: 18px; }
.more { margin-left: 5px; }
.tri { border: 3px solid transparent; border-top: 4px solid #444; border-bottom: 0; margin: 0 2px; }
.info { width: 457px; margin-left: auto; margin-right: 21px; }
.info input { width: 180px; height: 22px; border: 1px solid #000; background: #fff; padding: 0 2px; font-size: 11px; }
.info input::placeholder { color: #666; font-style: italic; opacity: 1; }
.info button { width: 24px; display: flex; justify-content: center; }
.info .sign { width: auto; margin-left: 3px; gap: 5px; align-items: center; }
.info .last { margin-left: auto; }
.info .help { margin-left: 11px; }
.info .last + button { margin-left: 4px; }
.info .tri:last-child { margin-right: 3px; }
.caption { display: flex; align-self: flex-start; border: 1px solid #5c5c5c; border-top: 0; border-radius: 0 0 5px 5px; overflow: hidden; height: 19px; }
.caption button { width: 27px; display: flex; align-items: center; justify-content: center; border-right: 1px solid #6c6c6c; background: linear-gradient(#cfcfcf, #b4b4b4 48%, #949494 50%, #b8b8b8); }
.caption .close { width: 46px; border: 0; background: linear-gradient(#dc9a8c, #cf6d58 48%, #b8301a 50%, #cc5a3c); }

.tabs { grid-area: 2 / 1 / 3 / 3; display: flex; align-items: flex-end; background: #3e3e3e; padding-left: 48px; color: #fff; }
.tabs button { height: 18px; padding: 0 8px; line-height: 18px; white-space: nowrap; }
.tabs .on { background: linear-gradient(#d8d8d8, #fff); color: #222; padding: 0 9px; border-radius: 2px 2px 0 0; }
.tabs svg { margin: 0 0 6px 22px; }

.client { flex: 1; display: flex; flex-direction: column; border: 1px solid #4c4c4c; border-top: 0; background: #f0f0f0; min-height: 0; }
.ribbon { display: flex; height: 95px; border-bottom: 1px solid #868686; background: linear-gradient(#d4d4d4, #8e8e8e); color: #3c3c3c; }
.panel { position: relative; display: flex; flex-direction: column; flex: none; background: #fff; border-right: 1px solid #b4b4b4; padding: 4px 1px 0; }
.panel .body { flex: 1; display: flex; min-height: 0; }
.panel h2 { height: 18px; line-height: 18px; background: #eee; text-align: center; }
.p-image { width: 178px; }
.p-tasks { width: 292px; z-index: 1; }
.p-compare { width: 57px; }
.p-report { width: 63px; }
.p-review { width: 107px; }
.p-step { width: 205px; }
.p-global { width: 313px; }
.p-global h2 { background: linear-gradient(#c8e6e6, #e0fafa); }
.drop { display: inline-block; border: 4px solid transparent; border-top: 5px solid #444; border-bottom: 0; margin: 0 0 2px 3px; }
.big, .tasks button { text-align: center; line-height: 15px; white-space: nowrap; }
.big { flex: 1; align-self: flex-start; }
.p-image .big { flex: none; width: 62px; }
.big svg, .tasks svg { margin: 2px auto 5px; }
.stack { display: flex; flex-direction: column; }
.stack button { display: flex; align-items: center; gap: 5px; height: 24px; white-space: nowrap; }
.p-image .stack { margin: -1px 0 0 2px; }
.panel .dim { color: #b4b4b4; flex-direction: column; padding-left: 5px; margin-top: -1px; }
.tasks { background: #f6f6f6; }
.tasks button { border-right: 2px solid #d0d0d0; background: linear-gradient(#fafafa, #eee); display: flex; flex-direction: column; align-items: center; }
.tasks .t-global { width: 41px; background: #b4d4f2; border: 1px solid #1c68b8; }
.tasks .t-global svg { margin-top: 1px; }
.t-planes { width: 39px; }
.t-iso { width: 69px; }
.t-wall { width: 60px; }
.t-parts { width: 38px; }
.t-points { width: 39px; }
.highlight { position: absolute; inset: 2px -4px -5px 0; border: 3px solid #f00; border-radius: 7px; }
.callout { position: absolute; width: 31px; height: 31px; border: 3px solid #f01414; border-radius: 50%; background: linear-gradient(#fde0b8, #fffaf4); color: #000; font: bold 16px/24px "Liberation Sans", Arial, sans-serif; text-align: center; box-shadow: 1px 2px 2px rgba(0,0,0,.3); }
.call-c { right: 0; bottom: -4px; z-index: 1; }
.panel .col { flex-direction: column; }
.p-global .col { margin-top: -1px; }
.pick { position: relative; display: block; }
.pick select { appearance: none; width: 100%; height: 22px; padding: 0 3px; border: 1px solid #c0c0c0; border-radius: 0; background: linear-gradient(#fafafa, #ececec); }
.pick::after { content: ""; position: absolute; right: 4px; top: 9px; border: 4px solid transparent; border-top: 5px solid #333; border-bottom: 0; pointer-events: none; }
.play { display: flex; gap: 8px; height: 25px; align-items: center; padding-left: 5px; }
.line { display: flex; align-items: center; gap: 5px; height: 24px; padding-left: 5px; }
.field { display: flex; align-items: center; padding-left: 2px; height: 24px; }
.field > span:first-child { width: 108px; }
.field .pick { flex: 1; }

.work { flex: 1; display: flex; margin-top: 5px; min-height: 0; }
.study { width: 287px; flex: none; display: flex; flex-direction: column; padding: 1px 4px 3px 0; font: 12px/19px "Noto Sans", sans-serif; }
.study-head { display: flex; align-items: center; gap: 6px; height: 19px; margin-bottom: 5px; padding-right: 3px; border: 1px solid #bcbcbc; background: #dadada; font-size: 11px; }
.study-head span { flex: 1; }
.tree { flex: 1; margin: 0 3px; background: #fff; border: 1px solid #828790; white-space: nowrap; }
.tree li { display: flex; align-items: center; height: 19px; gap: 6px; padding-left: 26px; color: #1010f0; }
.tree .note { height: 20px; padding-left: 4px; gap: 7px; color: #000; }
.tree .design, .tree .scen { height: 26px; font-size: 13px; font-weight: 700; padding-left: 4px; gap: 5px; }
.tree .design { color: #000; }
.tree .geo { padding-left: 21px; color: #000; }
.tree .scen { padding-left: 7px; }
.tree .scen .tog { margin-right: 3px; }
.tog { width: 7px; display: flex; }

.stage { flex: 1; min-width: 0; display: flex; flex-direction: column; font: 11px/14px "Noto Sans", sans-serif; }
.view { position: relative; flex: 1; min-height: 0; background: #fff; }
.model { position: absolute; inset: 0; width: 100%; height: 100%; }
.scale-text { font-size: 11px; }
.cube-text { font-size: 6px; font-weight: 700; fill: #999; }
.call-b { left: 256px; top: 50px; }
.navbar { position: absolute; right: 1px; top: 79px; width: 35px; height: 240px; border: 2px solid #dadada; border-radius: 6px; background: #f9f9f9; display: flex; flex-direction: column; align-items: center; }
.navbar .end { align-self: flex-end; margin: 1px 2px 0 0; }
.navbar .end:last-child { margin: auto 2px 2px 0; }
.navbar .wheel { margin-top: 9px; }
.navbar hr { width: 27px; margin: 0 0 3px; border: 0; border-top: 1px solid #ccc; }
.navbar .zoom { margin-top: 4px; }
.navbar .fit { margin-top: 3px; }
.nav-tri { border: 3px solid transparent; border-top: 3px solid #b8babe; border-bottom: 0; margin: 7px 0 4px; }
.output { height: 22px; margin: 5px 6px 0 1px; border: 1px solid #707070; border-radius: 3px; background: linear-gradient(#f4f4f4, #e8e8e8 48%, #d8d8d8 50%, #ccc); box-shadow: inset 0 0 0 1px #fafafa; }
.plot-panel { display: flex; gap: 7px; margin: 0 2px 0 0; padding: 6px 6px 7px; border: 1px solid #828790; background: #fff; }
.plot-main { flex: 1; min-width: 0; }
.folds { display: flex; }
.folds button { position: relative; height: 15px; margin-bottom: -1px; z-index: 1; }
.folds svg { position: absolute; inset: 0; width: 100%; height: 100%; overflow: visible; }
.folds path { fill: #f0f0f0; stroke: #222; vector-effect: non-scaling-stroke; }
.folds .on path { fill: #fff; }
.folds span { position: relative; display: block; line-height: 15px; }
.plot { width: 41px; }
.table { width: 48px; margin-left: 1px; }
.chart { position: relative; display: flex; border: 1px solid #828790; }
.curves { flex: 1; min-width: 0; overflow: visible; }
.axis-text { font-size: 11px; }
.legend { width: 78px; padding: 3px 5px 0 10px; }
.legend li { display: flex; align-items: center; justify-content: space-between; height: 18px; }
.legend li::after { content: ""; width: 27px; height: 2px; background: currentColor; margin-bottom: 2px; }
.vx::after { color: #00f; }
.vy::after { color: #0f0; }
.vz::after { color: #f0f; }
.temp::after { color: #f00; }
.tke::after { color: #0ff; }
.ted::after { color: #808000; }
.scalar::after { color: silver; }
.call-a { left: 108px; top: 16px; }
.range { display: flex; align-items: center; height: 20px; margin-top: 5px; }
.range input { width: 133px; height: 20px; border: 1px solid #dcdfe6; border-radius: 2px; padding: 0 4px; margin: 0 4px 0 5px; }
.plot-side { width: 87px; display: flex; flex-direction: column; gap: 5px; }
.plot-side .pick select { height: 20px; padding: 0 2px; border: 1px solid #707070; border-radius: 3px; background: linear-gradient(#f4f4f4, #e8e8e8 48%, #d8d8d8 50%, #ccc); display: block; }
.plot-side .pick::after { top: 8px; right: 5px; border-top-color: #000; }
.check { display: flex; align-items: center; gap: 4px; color: #787878; height: 18px; }
.check input { appearance: none; width: 13px; height: 13px; border: 1px solid #b4b4b4; background: #f6f6f6; }
.save { height: 21px; margin: auto 1px 5px; border: 1px solid #adb2b5; border-radius: 3px; background: #f4f4f4; color: #838383; font-size: 12px; }
.q { align-self: center; margin-bottom: 4px; }
.low { height: 14px; }
.low button { margin-top: -1px; }
.msg { width: 106px; }
.conv { width: 109px; }
.status { display: flex; align-items: center; justify-content: space-between; height: 28px; padding-left: 5px; font: 11px/14px "Noto Sans", sans-serif; }
```
